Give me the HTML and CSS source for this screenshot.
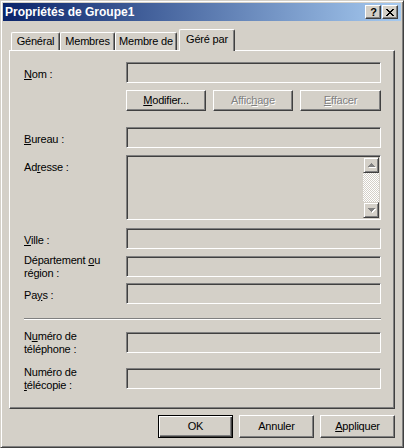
FILE: index.html
```html
<!DOCTYPE html>
<html lang="fr">
<head>
<meta charset="utf-8">
<title>Propriétés de Groupe1</title>
<link rel="stylesheet" href="styles.css">
</head>
<body>
<div class="window">
  <div class="titlebar">
    <span class="title">Propriétés de Groupe1</span>
    <div class="caption">
      <div class="cap-btn help">?</div>
      <div class="cap-btn close">
        <svg width="16" height="14" viewBox="0 0 16 14" shape-rendering="crispEdges"><polygon points="4,4 6,4 12,11 10,11" fill="#000"/><polygon points="10,4 12,4 6,11 4,11" fill="#000"/></svg>
      </div>
    </div>
  </div>
  <div class="content">
    <div class="tabs">
      <div class="tab w-gen">Général</div>
      <div class="tab w-mem">Membres</div>
      <div class="tab w-memde">Membre de</div>
      <div class="tab active">Géré par</div>
    </div>
    <div class="panel">
      <div class="row">
        <div class="lbl"><u>N</u>om :</div>
        <div class="field"></div>
      </div>
      <div class="row btn-row">
        <div class="btn w80"><span><u>M</u>odifier...</span></div>
        <div class="btn w80 disabled"><span>Affic<u>h</u>age</span></div>
        <div class="btn w81 disabled"><span><u>E</u>ffacer</span></div>
      </div>
      <div class="row r-bureau">
        <div class="lbl"><u>B</u>ureau :</div>
        <div class="field"></div>
      </div>
      <div class="row r-adr">
        <div class="lbl">Ad<u>r</u>esse :</div>
        <div class="field area">
          <div class="scrollbar">
            <div class="sb-btn">
              <svg width="8" height="5" viewBox="0 0 8 5" shape-rendering="crispEdges"><g fill="#fff" transform="translate(1,1)"><rect x="3" y="0" width="1" height="1"/><rect x="2" y="1" width="3" height="1"/><rect x="1" y="2" width="5" height="1"/><rect x="0" y="3" width="7" height="1"/></g><g fill="#808080"><rect x="3" y="0" width="1" height="1"/><rect x="2" y="1" width="3" height="1"/><rect x="1" y="2" width="5" height="1"/><rect x="0" y="3" width="7" height="1"/></g></svg>
            </div>
            <div class="sb-track"></div>
            <div class="sb-btn">
              <svg width="8" height="5" viewBox="0 0 8 5" shape-rendering="crispEdges"><g fill="#fff" transform="translate(1,1)"><rect x="0" y="0" width="7" height="1"/><rect x="1" y="1" width="5" height="1"/><rect x="2" y="2" width="3" height="1"/><rect x="3" y="3" width="1" height="1"/></g><g fill="#808080"><rect x="0" y="0" width="7" height="1"/><rect x="1" y="1" width="5" height="1"/><rect x="2" y="2" width="3" height="1"/><rect x="3" y="3" width="1" height="1"/></g></svg>
            </div>
          </div>
        </div>
      </div>
      <div class="row r-ville">
        <div class="lbl"><u>V</u>ille :</div>
        <div class="field"></div>
      </div>
      <div class="row r-dept">
        <div class="lbl two">Département <u>o</u>u<br>région :</div>
        <div class="field"></div>
      </div>
      <div class="row r-pays">
        <div class="lbl">Pa<u>y</u>s :</div>
        <div class="field"></div>
      </div>
      <div class="separator"></div>
      <div class="row r-tel">
        <div class="lbl two">N<u>u</u>méro de<br>téléphone :</div>
        <div class="field"></div>
      </div>
      <div class="row r-fax">
        <div class="lbl two">Numéro de<br><u>t</u>élécopie :</div>
        <div class="field"></div>
      </div>
    </div>
    <div class="actions">
      <div class="btn dlg default"><span>OK</span></div>
      <div class="btn dlg"><span>Annuler</span></div>
      <div class="btn dlg"><span><u>A</u>ppliquer</span></div>
    </div>
  </div>
</div>
</body>
</html>
```
FILE: styles.css
```css
* {
  box-sizing: border-box;
}

body {
  margin: 0;
  font-family: "Liberation Sans", Arial, sans-serif;
  font-size: 11px;
  line-height: 13px;
  letter-spacing: -0.2px;
  color: #000;
  background: #d4d0c8;
}

u {
  text-decoration: underline;
  text-underline-offset: 1px;
}

.window {
  width: 404px;
  height: 448px;
  border: 1px solid;
  border-color: #d4d0c8 #404040 #404040 #d4d0c8;
  padding: 2px;
  box-shadow: inset 1px 1px #fff, inset -1px -1px #808080;
  background: #d4d0c8;
  display: flex;
  flex-direction: column;
}

.titlebar {
  height: 18px;
  flex: none;
  background: linear-gradient(to right, #0a246a, #a6caf0);
  display: flex;
  align-items: flex-start;
  padding-left: 2px;
}

.title {
  flex: 1;
  color: #fff;
  font-weight: bold;
  font-size: 12px;
  letter-spacing: 0;
  line-height: 18px;
  white-space: nowrap;
}

.caption {
  display: flex;
  gap: 1px;
  margin-top: 2px;
  margin-right: 3px;
}

.cap-btn {
  width: 16px;
  height: 14px;
  background: #d4d0c8;
  border: 1px solid;
  border-color: #fff #404040 #404040 #fff;
  box-shadow: inset -1px -1px #808080;
  display: flex;
  align-items: center;
  justify-content: center;
  position: relative;
}

.cap-btn.help {
  font-weight: bold;
  font-size: 11px;
  line-height: 12px;
  letter-spacing: 0;
  padding-left: 1px;
}

.cap-btn.close svg {
  position: absolute;
  left: -1px;
  top: -1px;
}

.content {
  flex: 1;
  padding: 8px 6px 0 6px;
  display: flex;
  flex-direction: column;
}

.tabs {
  display: flex;
  align-items: flex-end;
  height: 21px;
  padding-left: 2px;
  flex: none;
}

.tab {
  height: 18px;
  border-top: 1px solid #fff;
  border-left: 1px solid #fff;
  border-right: 1px solid #404040;
  border-radius: 2px 2px 0 0;
  box-shadow: inset -1px 0 #808080;
  background: #d4d0c8;
  text-align: center;
  padding-top: 2px;
  white-space: nowrap;
}

.w-gen { width: 49px; }
.w-mem { width: 55px; }
.w-memde { width: 62px; }

.tab.active {
  width: 56px;
  height: 22px;
  margin-left: 2px;
  margin-bottom: -1px;
  padding-top: 3px;
  position: relative;
  z-index: 1;
}

.panel {
  width: 386px;
  height: 359px;
  flex: none;
  border: 1px solid;
  border-color: #fff #404040 #404040 #fff;
  box-shadow: inset -1px -1px #808080;
  padding: 11px 0 0 14px;
  display: flex;
  flex-direction: column;
}

.row {
  display: flex;
  height: 21px;
  flex: none;
}

.lbl {
  width: 102px;
  flex: none;
  padding-top: 6px;
  white-space: nowrap;
}

.lbl.two {
  padding-top: 0;
  margin-top: -2px;
}

.field {
  width: 255px;
  height: 21px;
  flex: none;
  border: 1px solid;
  border-color: #808080 #fff #fff #808080;
  box-shadow: inset 1px 1px #404040, inset -1px -1px #d4d0c8;
  background: #d4d0c8;
}

.btn-row {
  margin-top: 7px;
  padding-left: 102px;
  gap: 7px;
}

.r-bureau { margin-top: 16px; }
.r-adr { margin-top: 7px; height: 65px; }
.r-ville { margin-top: 8px; }
.r-dept { margin-top: 7px; }
.r-pays { margin-top: 6px; }
.r-tel { margin-top: 12px; }
.r-fax { margin-top: 15px; }

.field.area {
  height: 65px;
  display: flex;
  justify-content: flex-end;
  padding: 1px;
}

.scrollbar {
  width: 16px;
  display: flex;
  flex-direction: column;
}

.sb-btn {
  width: 16px;
  height: 16px;
  flex: none;
  background: #d4d0c8;
  border: 1px solid;
  border-color: #d4d0c8 #404040 #404040 #d4d0c8;
  box-shadow: inset 1px 1px #fff, inset -1px -1px #808080;
  display: flex;
  align-items: center;
  justify-content: center;
}

.sb-btn svg {
  margin-left: 1px;
  margin-top: 1px;
}

.sb-track {
  flex: 1;
  background-image: repeating-conic-gradient(#fff 0 25%, #d4d0c8 0 50%);
  background-size: 2px 2px;
}

.separator {
  width: 357px;
  height: 2px;
  margin-top: 14px;
  flex: none;
  border-top: 1px solid #808080;
  border-bottom: 1px solid #fff;
}

.btn {
  height: 21px;
  flex: none;
  background: #d4d0c8;
  border: 1px solid;
  border-color: #fff #404040 #404040 #fff;
  box-shadow: inset -1px -1px #808080;
  display: flex;
  align-items: center;
  justify-content: center;
  white-space: nowrap;
}

.w80 { width: 80px; }
.w81 { width: 81px; }

.btn.disabled {
  color: #808080;
  text-shadow: 1px 1px #fff;
}

.actions {
  display: flex;
  justify-content: flex-end;
  gap: 6px;
  margin-top: 6px;
}

.btn.dlg {
  width: 75px;
  height: 23px;
}

.btn.default {
  border: 1px solid #000;
  box-shadow: inset 1px 1px #fff, inset -1px -1px #404040, inset -2px -2px #808080;
}
```
